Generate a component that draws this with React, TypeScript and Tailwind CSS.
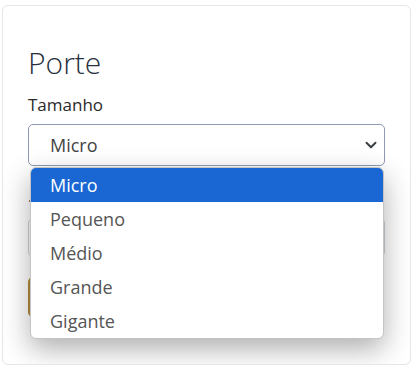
const options = ['Micro', 'Pequeno', 'Médio', 'Grande', 'Gigante'];

export default function App() {
  return (
    <div className="w-[413px] h-[366px] bg-white pl-[2px] pt-[5px]" style={{ fontFamily: '"Open Sans", "Noto Sans", sans-serif' }}>
      <div className="w-[409px] h-[360px] border border-[#e3e6ea] rounded-md overflow-hidden px-[25px] pt-[39px]">
        {/* Title */}
        <h2 className="text-[30px] leading-[36px] font-light text-[#27303d]">Porte</h2>

        <label className="block mt-[12px] text-[17px] leading-[24px] font-normal text-[#2a2a2a]">Tamanho</label>

        {/* Select with open list */}
        <div className="relative mt-[7px]">
          <div className="h-[42px] border border-[#8d9ab2] rounded-[5px] flex items-center pl-[21px] pr-[7px] bg-white">
            <span className="flex-1 text-[18px] leading-[27px] text-[#444]">Micro</span>
            <svg width="12" height="12" viewBox="0 0 16 16" className="text-[#3a3f45]">
              <path d="M2 5l6 6 6-6" fill="none" stroke="currentColor" strokeWidth="2.6" strokeLinecap="round" strokeLinejoin="round" />
            </svg>
          </div>

          {/* Form fields hidden behind the open list */}
          <div className="mt-[34px] ml-[1px] w-[2px] h-[2px] bg-[#a08060]" />
          <div className="mt-[16px] h-[39px] border border-[#ced4da] rounded-[5px] bg-white" />
          <div className="mt-[20px] h-[40px] w-[120px] rounded-[5px] bg-[#b38c3c]" />

          <div className="absolute left-[2px] right-[1px] top-[43px] bg-white border border-[#c4c4c4] rounded-[6px] overflow-hidden shadow-[0_10px_28px_rgba(0,0,0,0.32)]">
            {options.map((opt, i) => (
              <div
                key={opt}
                className={`h-[34px] pl-[19px] text-[18px] leading-[34px] ${i === 0 ? 'bg-[#1a67d3] text-white' : 'text-[#555]'}`}
              >
                {opt}
              </div>
            ))}
          </div>
        </div>
      </div>
    </div>
  );
}
